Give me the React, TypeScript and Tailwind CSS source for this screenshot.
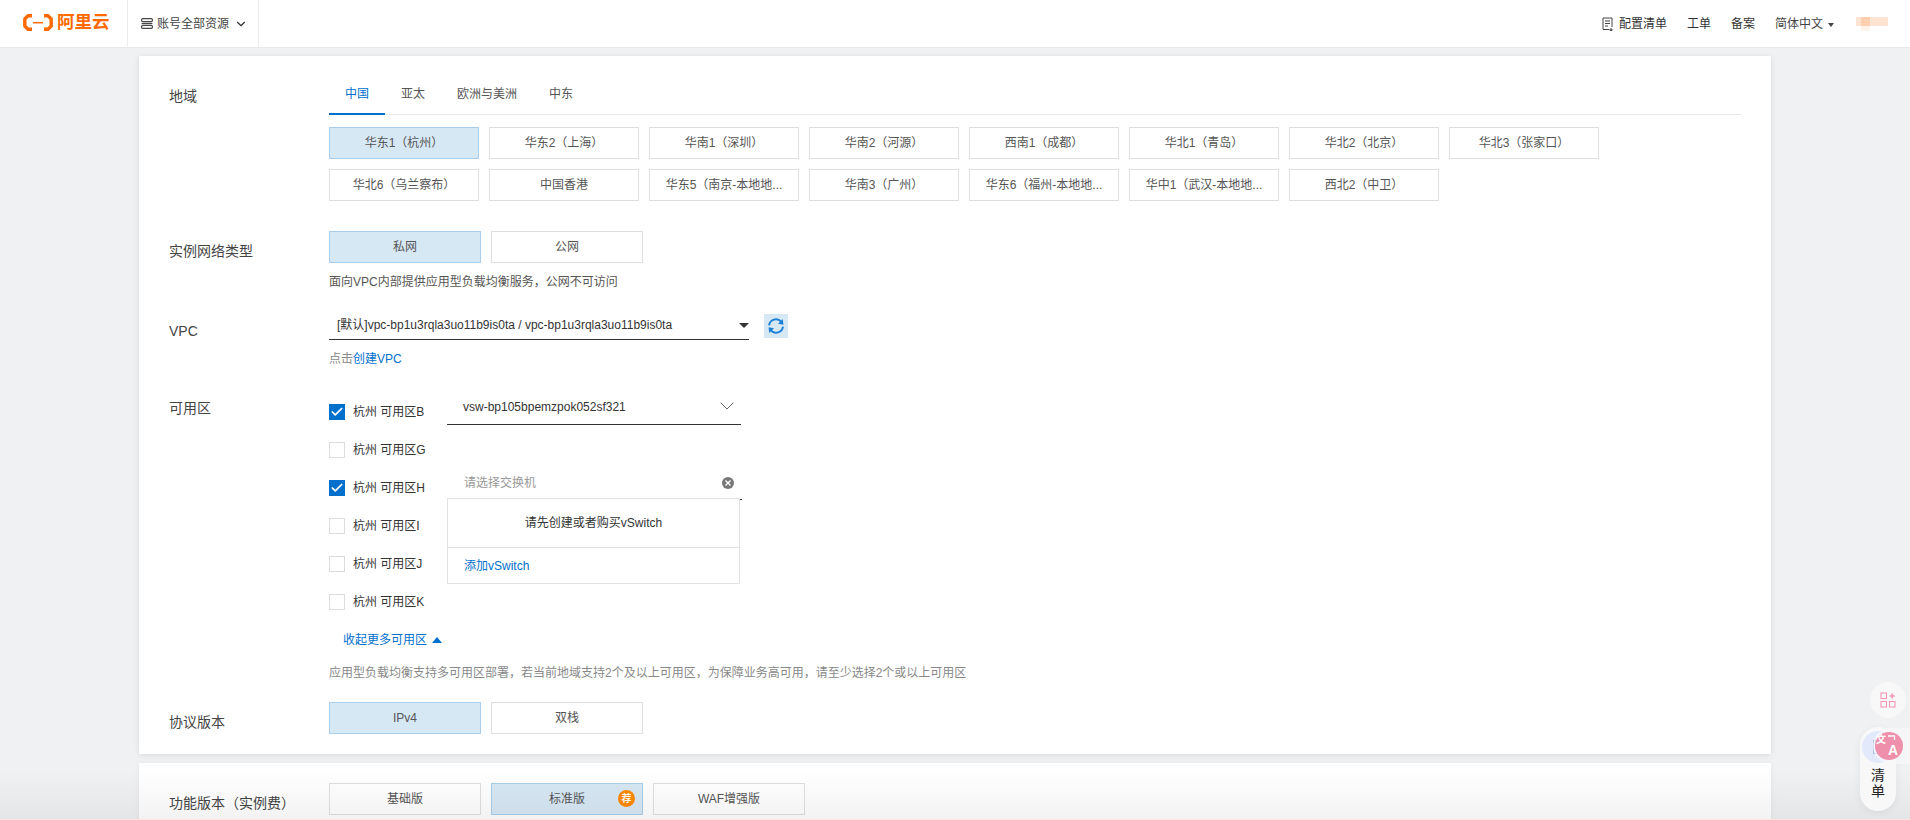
import { ChevronDown, Check } from 'lucide-react';

const regions = [
    '华东1（杭州）', '华东2（上海）', '华南1（深圳）', '华南2（河源）', '西南1（成都）', '华北1（青岛）', '华北2（北京）', '华北3（张家口）',
    '华北6（乌兰察布）', '中国香港', '华东5（南京-本地地...', '华南3（广州）', '华东6（福州-本地地...', '华中1（武汉-本地地...', '西北2（中卫）',
];

function Option({ label, active, wide }: { label: string; active?: boolean; wide?: boolean }) {
    return (
        <div className={`h-8 flex items-center justify-center border text-xs text-[#555] ${wide ? 'w-[152px]' : 'w-[150px]'} ${active ? 'bg-[#d7e8f5] border-[#a9cfec]' : 'bg-white border-[#dfdfdf]'}`}>
            {label}
        </div>
    );
}

function Zone({ name, checked, children }: { name: string; checked?: boolean; children?: React.ReactNode }) {
    return (
        <div className="h-[38px] flex items-center">
            <div className={`w-4 h-4 flex items-center justify-center border ${checked ? 'bg-[#0070cc] border-[#0070cc]' : 'bg-white border-[#dcdcdc]'}`}>
                {checked && <Check size={14} strokeWidth={3} className="text-white" />}
            </div>
            <span className="ml-2 w-[94px] text-xs text-[#333]">杭州 可用区{name}</span>
            {children}
        </div>
    );
}

export default function App() {
    return (
        <div className="relative w-[1910px] h-[820px] overflow-hidden bg-[#f0f1f3] [font-family:'Liberation_Sans','Noto_Sans_CJK_SC',sans-serif]">
            {/* Top bar */}
            <header className="h-12 bg-white border-b border-[#e8e9eb] flex items-stretch">
                <div className="w-[128px] pl-[23px] pb-[2px] flex items-center border-r border-[#eceded]">
                    <svg width="30" height="17" viewBox="0 0 30 17" fill="none" stroke="#ff6a00">
                        <path d="M9 1.8H5L1.8 5V12L5 15.2H9" strokeWidth="3.4" strokeLinejoin="round" />
                        <path d="M21 1.8H25L28.2 5V12L25 15.2H21" strokeWidth="3.4" strokeLinejoin="round" />
                        <path d="M10 8.7H20" strokeWidth="1.5" />
                    </svg>
                    <span className="ml-[4px] text-[17.5px] leading-none font-bold text-[#ff6a00]">阿里云</span>
                </div>
                <div className="w-[131px] pl-[13px] flex items-center border-r border-[#eceded]">
                    <svg width="12" height="11" viewBox="0 0 12 11" fill="none" stroke="#444" strokeWidth="1.2">
                        <rect x="0.6" y="0.6" width="10.8" height="3" rx="1.2" />
                        <path d="M0.6 5.5H11.4" />
                        <rect x="0.6" y="7.4" width="10.8" height="3" rx="1.2" />
                    </svg>
                    <span className="ml-[4px] text-xs text-[#444]">账号全部资源</span>
                    <ChevronDown size={14} strokeWidth={2} className="ml-[5px] text-[#333]" />
                </div>
                <div className="flex-1" />
                <div className="flex items-center text-xs text-[#333] pr-[22px]">
                    <svg width="11" height="14" viewBox="0 0 11 14" fill="none" stroke="#444" strokeWidth="1">
                        <path d="M7 12.5H1V1H10V10" />
                        <path d="M3 4H8M3 6.5H8M3 9H6" />
                        <path d="M8 12H10V13.5H8Z" />
                    </svg>
                    <span className="ml-[6px]">配置清单</span>
                    <span className="ml-5">工单</span>
                    <span className="ml-5">备案</span>
                    <span className="ml-5 text-[#444]">简体中文</span>
                    <span className="ml-[5px] mt-[2px] border-x-[3.5px] border-t-[4px] border-x-transparent border-t-[#444]" />
                    {/* blurred account avatar */}
                    <div className="relative ml-[21px] w-[33px] h-[14px]">
                        <div className="absolute left-[1px] top-0 w-[32px] h-[9px] bg-[#ffe3d3]" />
                        <div className="absolute left-[6px] top-0 w-[9px] h-[9px] bg-[#ffcfb0]" />
                        <div className="absolute left-[6px] top-[9px] w-[9px] h-[5px] bg-[#fff3ec]" />
                    </div>
                </div>
            </header>

            {/* Main form card */}
            <main className="w-[1632px] mx-auto mt-2 bg-white pt-[17px] pb-5 pl-[30px] pr-[30px] shadow-[0_1px_6px_rgba(0,0,0,0.1)]">
                <div className="flex">
                    <div className="w-40 pt-[13px] text-sm leading-5 text-[#444]">地域</div>
                    <div className="flex-1">
                        <div className="flex h-[42px] border-b border-[#e9e9e9] text-xs">
                            <div className="w-14 h-[42px] flex items-center justify-center pt-[2px] text-[#0070cc] border-b-2 border-[#0070cc]">中国</div>
                            <div className="w-14 h-[41px] flex items-center justify-center pt-[1px] text-[#555]">亚太</div>
                            <div className="w-[92px] h-[41px] flex items-center justify-center pt-[1px] text-[#555]">欧洲与美洲</div>
                            <div className="w-14 h-[41px] flex items-center justify-center pt-[1px] text-[#555]">中东</div>
                        </div>
                        <div className="mt-3 flex flex-wrap gap-[10px]">
                            {regions.map((r, i) => <Option key={r} label={r} active={i === 0} />)}
                        </div>
                    </div>
                </div>

                <div className="flex mt-[30px]">
                    <div className="w-40 pt-[10px] text-sm leading-5 text-[#444]">实例网络类型</div>
                    <div>
                        <div className="flex gap-[10px]">
                            <Option label="私网" active wide />
                            <Option label="公网" wide />
                        </div>
                        <p className="mt-[10px] text-xs leading-[18px] text-[#555]">面向VPC内部提供应用型负载均衡服务，公网不可访问</p>
                    </div>
                </div>

                <div className="flex mt-[23px]">
                    <div className="w-40 pt-[7px] text-sm leading-5 text-[#444]">VPC</div>
                    <div>
                        <div className="flex">
                            <div className="w-[420px] h-[26px] pl-2 flex items-start justify-between border-b border-[#333] text-xs leading-[23px] text-[#333]">
                                <span>[默认]vpc-bp1u3rqla3uo11b9is0ta / vpc-bp1u3rqla3uo11b9is0ta</span>
                                <span className="mt-[9px] border-x-[5px] border-t-[5px] border-x-transparent border-t-[#333]" />
                            </div>
                            <div className="ml-[15px] w-6 h-6 bg-[#d7e8f5] flex items-center justify-center">
                                <svg width="18" height="18" viewBox="0 0 16 16" fill="none" stroke="#1a7fd6" strokeWidth="1.7">
                                    <path d="M1.8 7.5A6.2 6.2 0 0 1 12.6 4.2" />
                                    <path d="M14.2 8.5A6.2 6.2 0 0 1 3.4 11.8" />
                                    <path d="M14 1.8L14.6 6.8L9.8 6Z" fill="#1a7fd6" stroke="none" />
                                    <path d="M2 14.2L1.4 9.2L6.2 10Z" fill="#1a7fd6" stroke="none" />
                                </svg>
                            </div>
                        </div>
                        <p className="mt-[10px] text-xs leading-[18px] text-[#888]">点击<span className="text-[#0070cc]">创建VPC</span></p>
                    </div>
                </div>

                <div className="flex mt-[25px]">
                    <div className="w-40 pt-[5px] text-sm leading-5 text-[#444]">可用区</div>
                    <div>
                        <Zone name="B" checked>
                            <div className="self-start w-[294px] h-8 pl-4 pr-[2px] flex items-start justify-between border-b border-[#333] text-xs leading-7 text-[#333]">
                                <span>vsw-bp105bpemzpok052sf321</span>
                                <ChevronDown size={24} strokeWidth={1} className="mt-px text-[#666]" />
                            </div>
                        </Zone>
                        <Zone name="G" />
                        <Zone name="H" checked>
                            <div className="relative self-start w-[294px] h-7 pl-[17px] pr-[7px] flex items-center justify-between text-xs text-[#999]">
                                <span>请选择交换机</span>
                                <span className="w-3 h-3 rounded-full bg-[#777] flex items-center justify-center text-white">
                                    <svg width="6" height="6" viewBox="0 0 6 6" stroke="currentColor" strokeWidth="1.4"><path d="M0.5 0.5L5.5 5.5M5.5 0.5L0.5 5.5" /></svg>
                                </span>
                                <span className="absolute right-[-1px] top-[30px] w-[2px] h-px bg-[#333]" />
                                {/* vSwitch dropdown menu */}
                                <div className="absolute left-0 top-[29px] w-[293px] h-[86px] bg-white border border-[#e1e1e1] z-10 flex flex-col">
                                    <div className="h-[48px] pb-[1px] flex items-center justify-center text-[#333]">请先创建或者购买vSwitch</div>
                                    <div className="flex-1 pl-4 pt-px flex items-center border-t border-[#e1e1e1] text-[#0070cc]">添加vSwitch</div>
                                </div>
                            </div>
                        </Zone>
                        <Zone name="I" />
                        <Zone name="J" />
                        <Zone name="K" />
                        <div className="h-[38px] pl-[14px] flex items-center text-xs text-[#0070cc]">
                            收起更多可用区
                            <span className="ml-[5px] border-x-[5px] border-b-[6px] border-x-transparent border-b-[#0070cc]" />
                        </div>
                        <p className="mt-[5px] text-xs leading-[18px] text-[#888]">应用型负载均衡支持多可用区部署，若当前地域支持2个及以上可用区，为保障业务高可用，请至少选择2个或以上可用区</p>
                    </div>
                </div>

                <div className="flex mt-5">
                    <div className="w-40 pt-[10px] text-sm leading-5 text-[#444]">协议版本</div>
                    <div className="flex gap-[10px]">
                        <Option label="IPv4" active wide />
                        <Option label="双栈" wide />
                    </div>
                </div>
            </main>

            {/* Second card, cut off by the window */}
            <section className="w-[1632px] mx-auto mt-[9px] bg-white pt-5 pb-5 pl-[30px] flex shadow-[0_1px_6px_rgba(0,0,0,0.06)]">
                <div className="w-40 pt-[10px] text-sm leading-5 text-[#444]">功能版本（实例费）</div>
                <div className="flex gap-[10px]">
                    <Option label="基础版" wide />
                    <div className="relative">
                        <Option label="标准版" active wide />
                        <span className="absolute right-[8px] top-[7px] w-[17px] h-[17px] rounded-full bg-[#ff8a00] text-white text-[10px] font-bold flex items-center justify-center">荐</span>
                    </div>
                    <Option label="WAF增强版" wide />
                </div>
            </section>

            {/* Bottom fade over the page */}
            <div className="absolute left-0 right-0 bottom-0 h-[50px] pointer-events-none bg-gradient-to-b from-black/0 to-black/[0.05]" />
            <div className="absolute left-0 right-0 bottom-0 h-px bg-[#fde4df]" />

            {/* Floating helpers on the right edge */}
            <div className="absolute left-[1870px] top-[682px] w-9 h-9 rounded-full bg-[#f8f8f9] flex items-center justify-center">
                <svg width="16" height="16" viewBox="0 0 16 16" fill="none" stroke="#f29ab5" strokeWidth="1.1">
                    <rect x="1" y="1" width="5.5" height="5.5" />
                    <rect x="1" y="9.5" width="5.5" height="5.5" />
                    <rect x="9.5" y="9.5" width="5.5" height="5.5" />
                    <path d="M12.2 0.5L13.2 3L15.7 4L13.2 5L12.2 7.5L11.2 5L8.7 4L11.2 3Z" fill="#f29ab5" stroke="none" />
                </svg>
            </div>
            <div className="absolute left-[1860px] top-[727px] w-9 h-[84px] rounded-full bg-[#f8f8f9] shadow-[0_2px_8px_rgba(0,0,0,0.06)] flex flex-col items-center pt-[4px]">
                <div className="w-8 h-8 rounded-full bg-[#e1e9fb] flex items-center pl-[11px]">
                    <div className="w-[10px] h-[14px] border border-[#a9b8f0]" />
                </div>
                <div className="mt-[4px] text-sm leading-4 text-[#222] text-center">清<br />单</div>
            </div>
            {/* translate widget, sits over the pill */}
            <div className="absolute left-[1873px] top-[728px] w-[37px] h-9 rounded-l-full bg-[#f8f8f9]/70 flex items-center pl-[2px]">
                <div className="relative w-7 h-7 rounded-full bg-[#ee8fab] text-white font-bold leading-none">
                    <span className="absolute left-[1px] top-[3px] text-[10px]">文</span>
                    <span className="absolute left-[13px] top-[11px] text-[14px]">A</span>
                    <svg className="absolute left-[12px] top-[3px]" width="9" height="7" viewBox="0 0 9 7" fill="none" stroke="white" strokeWidth="1.3">
                        <path d="M1 1H7.5V5" />
                    </svg>
                </div>
            </div>
        </div>
    );
}
